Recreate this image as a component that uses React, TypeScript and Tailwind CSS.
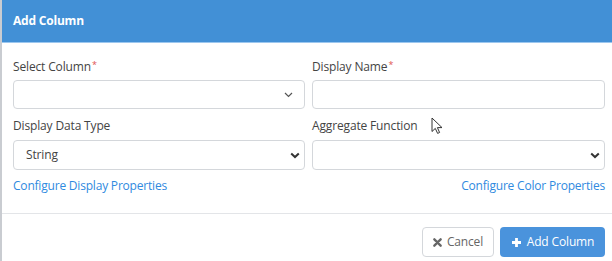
import React from "react";

const font = { fontFamily: '"Open Sans", "Noto Sans", sans-serif' };

function ThinChevron() {
  return (
    <svg width="9" height="6" viewBox="0 0 9 6" className="text-[#555]">
      <path d="M1 1l3.5 3.5L8 1" fill="none" stroke="currentColor" strokeWidth="1.2" />
    </svg>
  );
}

function BoldChevron() {
  return (
    <svg width="10" height="7" viewBox="0 0 10 7" className="text-[#333]">
      <path d="M1.2 1.4l3.8 3.6 3.8-3.6" fill="none" stroke="currentColor" strokeWidth="2" />
    </svg>
  );
}

function Label({ text, req }: { text: string; req?: boolean }) {
  return (
    <div className="h-[24px] flex items-center text-[12px] tracking-[-0.15px] text-[#444] leading-none">
      {text}
      {req && <span className="text-[#e0534f] text-[9px] ml-[1px] -mt-[6px]">*</span>}
    </div>
  );
}

export default function App() {
  return (
    <div className="relative w-[612px] h-[261px] bg-white overflow-hidden border-l-2 border-[#c9ccd1]" style={font}>
      <div className="h-[43px] bg-[#4290d6] flex items-center pl-[11px] pb-[1px] text-white font-bold text-[12px] tracking-[-0.2px] border-b border-[#9cc7ef]">
        Add Column
      </div>
      <div className="pl-[11px] pr-[7px] pt-[12px]">
        <div className="grid grid-cols-[292px_293px] gap-x-[7px]">
          <div>
            <Label text="Select Column" req />
            <div className="mt-[1px] h-[29px] border border-[#d4d7db] rounded-[4px] flex items-center justify-end pr-[11px]">
              <ThinChevron />
            </div>
          </div>
          <div>
            <Label text="Display Name" req />
            <div className="mt-[1px] h-[29px] border border-[#d4d7db] rounded-[4px]" />
          </div>
          <div className="mt-[5px]">
            <Label text="Display Data Type" />
            <div className="mt-[2px] h-[30px] border border-[#d4d7db] rounded-[4px] flex items-center justify-between pl-[12px] pr-[4px] text-[12px] tracking-[-0.15px] text-[#444]">
              <span>String</span>
              <BoldChevron />
            </div>
          </div>
          <div className="mt-[5px]">
            <Label text="Aggregate Function" />
            <div className="mt-[2px] h-[30px] border border-[#d4d7db] rounded-[4px] flex items-center justify-end pr-[4px]">
              <BoldChevron />
            </div>
          </div>
        </div>
        <div className="flex justify-between items-center h-[32px] text-[12px] tracking-[-0.2px] text-[#2f8ae0]">
          <span>Configure Display Properties</span>
          <span>Configure Color Properties</span>
        </div>
      </div>
      <div className="mt-[11px] border-t border-[#e3e5e8]" />
      <div className="flex justify-end gap-[6px] pr-[7px] pt-[13px]">
        <div className="h-[30px] w-[72px] border border-[#d4d7db] rounded-[4px] flex items-center justify-center gap-[5px] text-[12px] tracking-[-0.15px] text-[#666]">
          <svg width="9" height="9" viewBox="0 0 10 10">
            <path d="M1.5 1.5l7 7M8.5 1.5l-7 7" stroke="#666" strokeWidth="2.6" strokeLinecap="round" />
          </svg>
          Cancel
        </div>
        <div className="h-[30px] w-[105px] bg-[#4a93dc] rounded-[4px] flex items-center justify-center gap-[5px] text-[12px] tracking-[-0.15px] text-white">
          <svg width="11" height="11" viewBox="0 0 11 11">
            <path d="M5.5 1v9M1 5.5h9" stroke="white" strokeWidth="2.8" />
          </svg>
          Add Column
        </div>
      </div>
      <svg className="absolute left-[429px] top-[117px]" width="14" height="18" viewBox="0 0 14 18">
        <path d="M1 1v13.5l3.3-3.1 2.3 5 2-0.9-2.2-4.9h4.6z" fill="white" stroke="#333" strokeWidth="1" strokeLinejoin="round" />
      </svg>
    </div>
  );
}
